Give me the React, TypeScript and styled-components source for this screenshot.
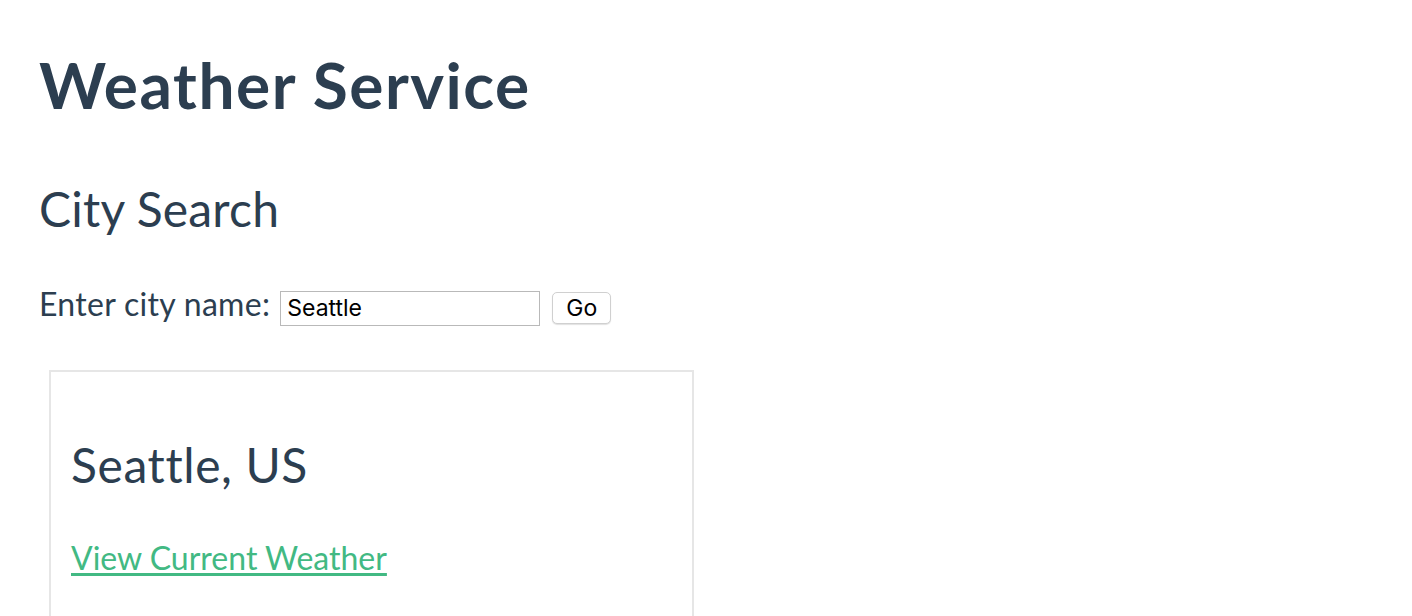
import React, { useState } from "react";
import styled, { createGlobalStyle } from "styled-components";

const GlobalStyle = createGlobalStyle`
  html, body {
    margin: 0;
    padding: 0;
    background: #ffffff;
  }
  body {
    font-family: Lato, "Noto Sans", sans-serif;
    color: #2c3e50;
    -webkit-font-smoothing: antialiased;
  }
`;

const Page = styled.div`
  padding: 47px 0 0 39px;
`;

const Title = styled.h1`
  margin: 0;
  font-size: 64px;
  line-height: 1.2;
  font-weight: 700;
  letter-spacing: 1.5px;
`;

const Heading = styled.h2`
  margin: 56px 0 0;
  font-size: 48px;
  line-height: 1.2;
  font-weight: 400;
  letter-spacing: 0.2px;
`;

const SearchRow = styled.form`
  display: flex;
  align-items: baseline;
  margin-top: 48px;
  height: 40px;
`;

const Label = styled.label`
  font-size: 32px;
  line-height: 1.2;
  letter-spacing: 0.3px;
  margin-right: 10px;
`;

const CityInput = styled.input`
  box-sizing: border-box;
  width: 260px;
  height: 35px;
  padding: 0 6px;
  border: 1px solid #b9b9b9;
  border-radius: 0;
  font-family: Inter, "Liberation Sans", sans-serif;
  font-size: 23px;
  color: #000;
  outline: none;
`;

const GoButton = styled.button`
  box-sizing: border-box;
  margin-left: 12px;
  width: 59px;
  height: 32px;
  padding: 0;
  border: 1px solid #d0d0d0;
  border-radius: 5px;
  background: #fff;
  box-shadow: 0 1px 1px rgba(0, 0, 0, 0.12);
  font-family: Inter, "Liberation Sans", sans-serif;
  font-size: 23px;
  color: #000;
`;

const Card = styled.div`
  box-sizing: border-box;
  width: 645px;
  margin: 45px 0 0 10px;
  padding: 64px 20px 80px;
  border: 2px solid #e6e6e6;
`;

const CityName = styled.h2`
  margin: 0;
  font-size: 48px;
  line-height: 1.2;
  font-weight: 400;
  letter-spacing: 0.6px;
`;

const WeatherLink = styled.a`
  display: inline-block;
  margin-top: 45px;
  font-size: 32px;
  line-height: 1.2;
  color: #42b983;
  text-decoration: underline;
  text-underline-offset: 3px;
`;

export default function App() {
  const [city, setCity] = useState("Seattle");

  return (
    <>
      <GlobalStyle />
      <Page>
        <Title>Weather Service</Title>
        <Heading>City Search</Heading>
        <SearchRow onSubmit={(e) => e.preventDefault()}>
          <Label htmlFor="city">Enter city name:</Label>
          <CityInput
            id="city"
            value={city}
            onChange={(e) => setCity(e.target.value)}
          />
          <GoButton type="submit">Go</GoButton>
        </SearchRow>
        <Card>
          <CityName>Seattle, US</CityName>
          <WeatherLink href="#">View Current Weather</WeatherLink>
        </Card>
      </Page>
    </>
  );
}
